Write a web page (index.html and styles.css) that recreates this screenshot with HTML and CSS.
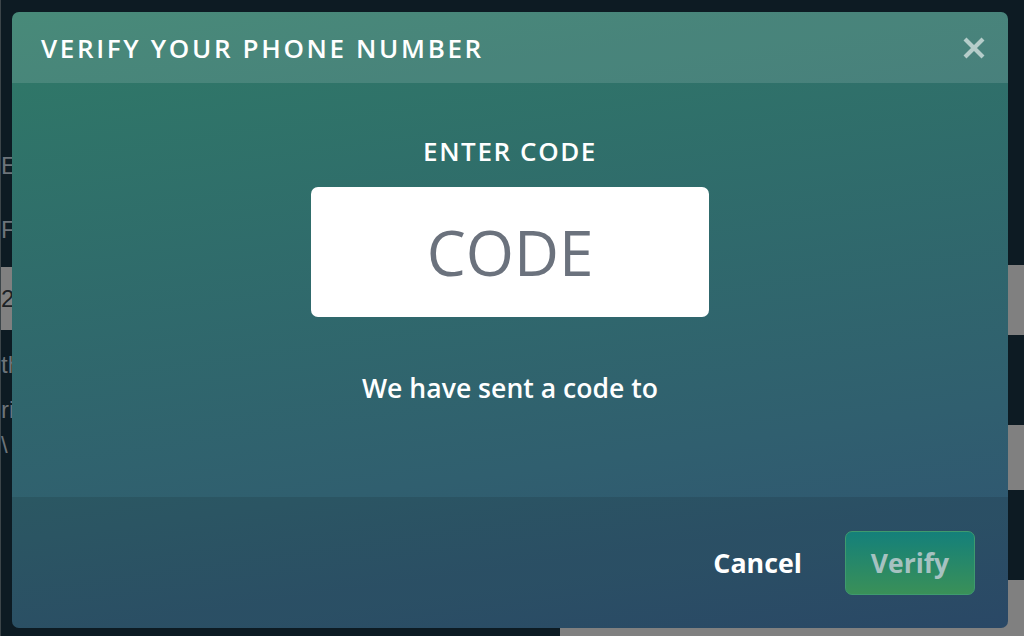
FILE: index.html
```html
<!DOCTYPE html>
<html lang="en">
<head>
<meta charset="utf-8">
<title>Verify your phone number</title>
<link rel="stylesheet" href="styles.css">
</head>
<body>
<div class="page">
  <div class="col col-left">
    <div class="band dark h143"></div>
    <div class="band dark h45 frag">EC</div>
    <div class="band dark h79 frag lh84">Fa</div>
    <div class="band grey h63 frag dark-text">2</div>
    <div class="band dark h55 frag lh70">th</div>
    <div class="band dark h45 frag lh50">ri</div>
    <div class="band dark fill frag lh30">\</div>
  </div>
  <div class="col col-right">
    <div class="band dark h265"></div>
    <div class="band grey h70"></div>
    <div class="band dark h90"></div>
    <div class="band grey h65"></div>
    <div class="band dark h90"></div>
    <div class="band grey fill"></div>
  </div>
</div>

<div class="modal" role="dialog" aria-labelledby="modal-title">
  <header class="modal-header">
    <h2 id="modal-title" class="modal-title">VERIFY YOUR PHONE NUMBER</h2>
    <button class="close" aria-label="Close">
      <svg width="24" height="24" viewBox="0 0 24 24"><path d="M3 3 L21 21 M21 3 L3 21" stroke="currentColor" stroke-width="4.2" stroke-linecap="butt" fill="none"/></svg>
    </button>
  </header>
  <section class="modal-body">
    <label class="code-label" for="code">ENTER CODE</label>
    <input id="code" class="code-input" type="text" placeholder="CODE">
    <p class="sent">We have sent a code to</p>
  </section>
  <footer class="modal-footer">
    <button class="btn-cancel">Cancel</button>
    <button class="btn-verify" disabled>Verify</button>
  </footer>
</div>
</body>
</html>
```

FILE: styles.css
```css
* { box-sizing: border-box; }
html, body { margin: 0; padding: 0; }
body {
  width: 1024px;
  height: 636px;
  overflow: hidden;
  background: #0d1b23;
  font-family: "Open Sans", "Noto Sans", sans-serif;
}
.page {
  display: flex;
  height: 636px;
}
.col { display: flex; flex-direction: column; height: 636px; }
.col-left { width: 560px; border-left: 1px solid #3c4549; }
.col-right { flex: 1; }
.band { flex: none; }
.band.fill { flex: 1; }
.dark { background: #0d1b23; }
.grey { background: #808080; }
.h45 { height: 45px; }
.h55 { height: 55px; }
.h63 { height: 63px; }
.h65 { height: 65px; }
.h70 { height: 70px; }
.h79 { height: 79px; }
.h90 { height: 90px; }
.h143 { height: 143px; }
.h265 { height: 265px; }
.frag {
  font-family: "Liberation Sans", sans-serif;
  font-size: 24px;
  color: #6c747a;
  line-height: 45px;
}
.lh84 { line-height: 84px; }
.lh70 { line-height: 70px; }
.lh50 { line-height: 50px; }
.lh30 { line-height: 30px; }
.dark-text { color: #1c2226; line-height: 63px; }

.modal {
  position: absolute;
  top: 12px;
  left: 12px;
  width: 996px;
  height: 616px;
  border-radius: 7px;
  overflow: hidden;
  display: flex;
  flex-direction: column;
  background: linear-gradient(172deg, #2f7a67 0%, #305f6f 70%, #2f5172 100%);
  color: #fff;
}
.modal-header {
  height: 71px;
  flex: none;
  display: flex;
  align-items: center;
  justify-content: space-between;
  padding: 0 22px 0 29px;
  background: rgba(255,255,255,0.12);
}
.modal-title {
  margin: 0;
  font-size: 26px;
  font-weight: 600;
  letter-spacing: 2.65px;
  color: #fff;
}
.close {
  background: none;
  border: 0;
  padding: 0;
  color: rgba(255,255,255,0.6);
  display: flex;
  cursor: pointer;
}
.modal-body {
  flex: 1;
  display: flex;
  flex-direction: column;
  align-items: center;
  padding-top: 52px;
}
.code-label {
  font-size: 26px;
  font-weight: 600;
  letter-spacing: 1.6px;
  line-height: 32px;
}
.code-input {
  margin-top: 20px;
  width: 398px;
  height: 130px;
  border: 0;
  border-radius: 7px;
  background: #fff;
  text-align: center;
  font-family: "Open Sans", "Noto Sans", sans-serif;
  font-size: 62px;
  font-weight: 500;
  color: #6b7280;
  outline: none;
}
.code-input::placeholder { color: #6b727d; opacity: 1; }
.sent {
  margin: 55px 0 0;
  font-size: 26.6px;
  font-weight: 600;
  line-height: 32px;
}
.modal-footer {
  height: 131px;
  flex: none;
  display: flex;
  justify-content: flex-end;
  align-items: center;
  gap: 43px;
  padding-right: 33px;
  background: rgba(0,0,0,0.1);
}
.btn-cancel {
  background: none;
  border: 0;
  padding: 0;
  color: #fff;
  font-family: inherit;
  font-size: 26.8px;
  font-weight: 700;
}
.btn-verify {
  width: 130px;
  height: 64px;
  border-radius: 7px;
  border: 1px solid #3e9a6e;
  background: linear-gradient(to bottom, #14807a, #3a9058);
  color: #a6c2c1;
  font-family: inherit;
  font-size: 26.5px;
  font-weight: 700;
}
```
